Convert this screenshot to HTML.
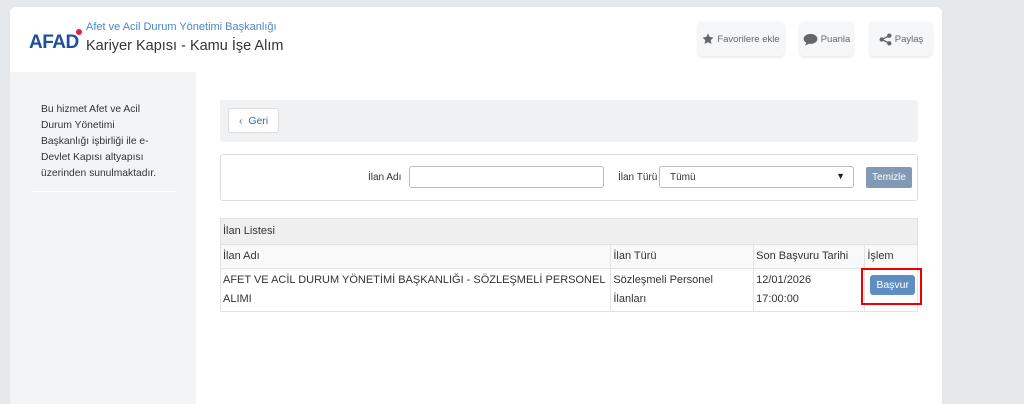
<!DOCTYPE html>
<html><head><meta charset="utf-8"><style>
*{box-sizing:border-box;margin:0;padding:0}
body{width:1024px;height:404px;background:#e6e9ec;font-family:"Liberation Sans",sans-serif;position:relative;overflow:hidden;color:#333}
.hdr{position:absolute;left:10px;top:7px;width:932px;height:65px;background:#fff;border-radius:6px 6px 0 0;box-shadow:0 2px 4px rgba(0,0,0,.05)}
.logo{position:absolute;left:19px;top:25px;font-weight:bold;font-size:19px;color:#1f4f9a;letter-spacing:-0.5px}
.dot{position:absolute;left:66px;top:22px;width:6px;height:6px;border-radius:50%;background:#e42236}
.t1{position:absolute;left:76px;top:14px;font-size:11px;color:#4a86c5}
.t2{position:absolute;left:76px;top:31px;font-size:14.5px;color:#333}
.btn{position:absolute;top:15px;height:34px;background:#f5f6f8;border-radius:4px;box-shadow:0 1px 3px rgba(0,0,0,.12);font-size:9.5px;color:#666;display:flex;align-items:center;justify-content:center;padding:0 4px;gap:3px;white-space:nowrap}
.btn svg{flex-shrink:0}
.side{position:absolute;left:10px;top:72px;width:186px;height:332px;background:#f3f4f6}
.side p{position:absolute;left:31px;top:30px;width:150px;font-size:10.3px;line-height:16px;color:#333;white-space:nowrap}
.side hr{position:absolute;left:21px;top:119px;width:145px;border:0;border-top:1px solid #fff}
.main{position:absolute;left:196px;top:72px;width:746px;height:332px;background:#fff}
.bar{position:absolute;left:24px;top:28px;width:698px;height:42px;background:#f0f1f3;border-radius:3px}
.geri{position:absolute;left:8px;top:8px;width:51px;height:25px;background:#fff;border:1px solid #ddd;border-radius:3px;font-size:10.5px;color:#2f6db5;padding:6px 0 0 10px}
.flt{position:absolute;left:24px;top:82px;width:698px;height:47px;border:1px solid #ddd;border-radius:3px}
.lbl{position:absolute;top:17px;font-size:10px;color:#333;white-space:nowrap}
.inp{position:absolute;top:11px;height:22px;border:1px solid #bbb;border-radius:3px;background:#fff;font-size:10px;padding:5px 10px}
.tem{position:absolute;left:645px;top:12px;width:46px;height:21px;background:#8199b4;color:#fff;font-size:10px;text-align:center;line-height:21px;border-radius:2px}
.tbl{position:absolute;left:24px;top:146px;width:698px;border:1px solid #e3e3e3}
.th1{height:25px;background:#efefef;font-size:11px;padding:6px 2px;color:#333}
table{border-collapse:collapse;width:100%;font-size:11px}
td{border-right:1px solid #e3e3e3;border-top:1px solid #e3e3e3;padding:2px 2px;vertical-align:top;line-height:19px;white-space:nowrap}
td:last-child{border-right:0}
.hrow td{background:#f9f9f9;padding:2px 2px}
.bas{display:inline-block;margin:4px 0 0 3px;background:#5f8fc2;color:#fff;font-size:10.5px;padding:2px 6px;border-radius:3px;line-height:16px}
.red{position:absolute;left:861px;top:268px;width:61px;height:37px;border:2px solid #e00}
</style></head><body>
<div class="hdr">
<div class="logo">AFAD</div><div class="dot"></div>
<div class="t1">Afet ve Acil Durum Yönetimi Başkanlığı</div>
<div class="t2">Kariyer Kapısı - Kamu İşe Alım</div>
<div class="btn" style="left:688px;width:86px"><svg width="12" height="12" viewBox="0 0 24 24"><path fill="#666" d="M12 1l3.4 7 7.6 1-5.5 5.3 1.3 7.7L12 18.3 5.2 22l1.3-7.7L1 9l7.6-1z"/></svg>Favorilere ekle</div>
<div class="btn" style="left:790px;width:53px"><svg width="15" height="13" viewBox="0 0 24 20"><ellipse cx="12" cy="9" rx="11" ry="8" fill="#666"/><path fill="#666" d="M3 20l3-6 5 2z"/></svg>Puanla</div>
<div class="btn" style="left:860px;width:62px"><svg width="13" height="13" viewBox="0 0 24 24"><g fill="#666"><circle cx="19" cy="5" r="4"/><circle cx="5" cy="12" r="4"/><circle cx="19" cy="19" r="4"/></g><path d="M19 5L5 12l14 7" stroke="#666" stroke-width="2.5" fill="none"/></svg>Paylaş</div>
</div>
<div class="side"><p>Bu hizmet Afet ve Acil<br>Durum Yönetimi<br>Başkanlığı işbirliği ile e-<br>Devlet Kapısı altyapısı<br>üzerinden sunulmaktadır.</p><hr></div>
<div class="main">
<div class="bar"><div class="geri">‹ &nbsp;Geri</div></div>
<div class="flt">
<span class="lbl" style="left:147px">İlan Adı</span>
<div class="inp" style="left:188px;width:195px"></div>
<span class="lbl" style="left:397px">İlan Türü</span>
<div class="inp" style="left:438px;width:195px">Tümü<span style="position:absolute;right:8px;top:4px;font-size:9px;color:#222">▼</span></div>
<div class="tem">Temizle</div>
</div>
<div class="tbl">
<div class="th1">İlan Listesi</div>
<table>
<tr class="hrow"><td style="width:390px">İlan Adı</td><td style="width:145px">İlan Türü</td><td style="width:112px">Son Başvuru Tarihi</td><td>İşlem</td></tr>
<tr><td>AFET VE ACİL DURUM YÖNETİMİ BAŞKANLIĞI - SÖZLEŞMELİ PERSONEL<br>ALIMI</td><td>Sözleşmeli Personel<br>İlanları</td><td>12/01/2026<br>17:00:00</td><td><span class="bas">Başvur</span></td></tr>
</table>
</div>
</div>
<div class="red"></div>
</body></html>
